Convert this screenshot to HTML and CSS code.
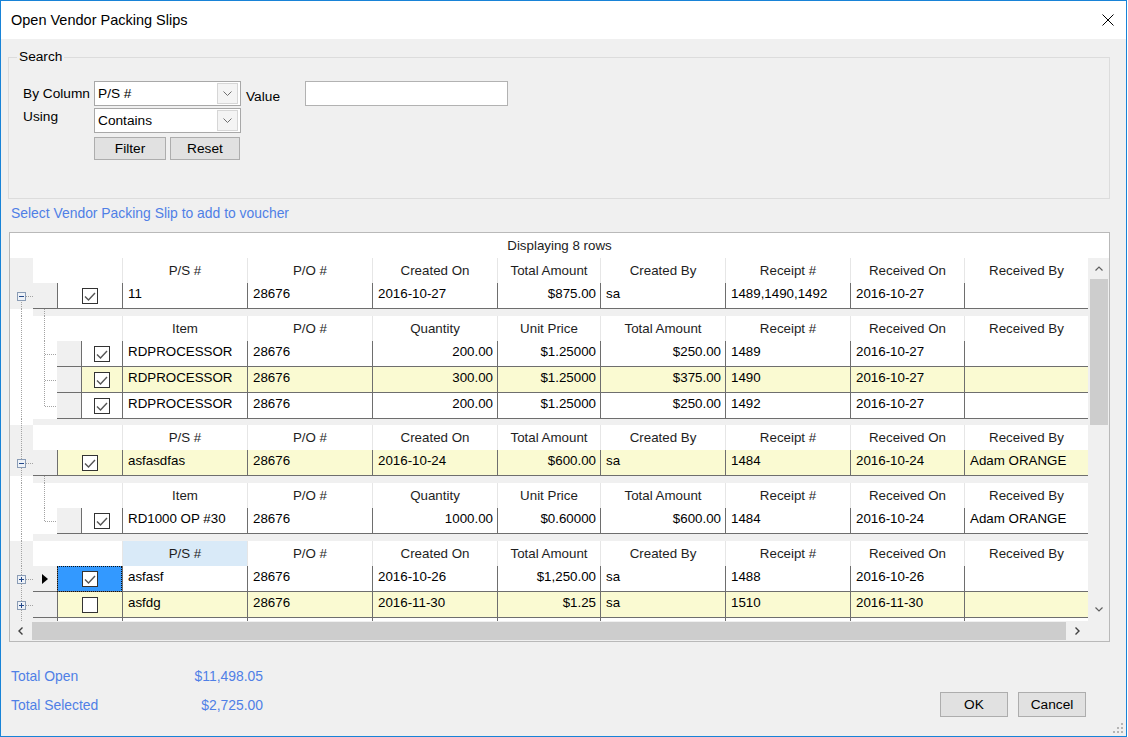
FILE: index.html
```html
<!DOCTYPE html>
<html>
<head>
<meta charset="utf-8">
<title>Open Vendor Packing Slips</title>
<link rel="stylesheet" href="styles.css">
</head>
<body>
<svg class="defs" width="0" height="0" aria-hidden="true">
  <defs>
    <symbol id="cb-on" viewBox="0 0 16 16"><rect x="0.5" y="0.5" width="15" height="15" fill="#fff" stroke="#333"/><polyline points="3,8.5 6.5,12 13,5" fill="none" stroke="#555" stroke-width="1.4"/></symbol>
    <symbol id="cb-off" viewBox="0 0 16 16"><rect x="0.5" y="0.5" width="15" height="15" fill="#fff" stroke="#333"/></symbol>
    <symbol id="ex-minus" viewBox="0 0 9 9"><rect x="0.5" y="0.5" width="8" height="8" fill="#eef2f7" stroke="#8a9cb5"/><path d="M2 4.5H7" stroke="#24498a"/></symbol>
    <symbol id="ex-plus" viewBox="0 0 9 9"><rect x="0.5" y="0.5" width="8" height="8" fill="#eef2f7" stroke="#8a9cb5"/><path d="M2 4.5H7M4.5 2V7" stroke="#24498a"/></symbol>
  </defs>
</svg>
<div class="window">
  <div class="titlebar">
    <span class="title">Open Vendor Packing Slips</span>
    <svg class="close" width="12" height="12" viewBox="0 0 12 12"><path d="M0.5 0.5L11.5 11.5M11.5 0.5L0.5 11.5" stroke="#000" stroke-width="1"/></svg>
  </div>
  <div class="content">
    <fieldset class="search">
      <legend>Search</legend>
      <div class="form">
        <div class="lbl l-col">By Column</div>
        <div class="combo c-col"><span>P/S #</span><span class="dd"><svg width="9" height="5" viewBox="0 0 9 5"><path d="M0.5 0.5L4.5 4.5L8.5 0.5" fill="none" stroke="#6f6f6f"/></svg></span></div>
        <div class="lbl l-value">Value</div>
        <div class="textbox"></div>
        <div class="lbl l-using">Using</div>
        <div class="combo c-using"><span>Contains</span><span class="dd"><svg width="9" height="5" viewBox="0 0 9 5"><path d="M0.5 0.5L4.5 4.5L8.5 0.5" fill="none" stroke="#6f6f6f"/></svg></span></div>
        <div class="btns"><button class="btn b-filter">Filter</button><button class="btn b-reset">Reset</button></div>
      </div>
    </fieldset>

    <div class="hint">Select Vendor Packing Slip to add to voucher</div>

    <div class="grid">
      <div class="caption">Displaying 8 rows</div>
      <div class="gbody">
        <div class="rows">

          <!-- Band 1 -->
          <div class="block">
            <div class="tree pg">
              <div class="t25"></div>
              <div class="t26 ln-start-stub"><svg class="exp" viewBox="0 0 9 9"><use href="#ex-minus"/></svg></div>
            </div>
            <div class="tbl">
              <div class="hrow p"><div class="h sp2"></div><div class="h">P/S #</div><div class="h">P/O #</div><div class="h">Created On</div><div class="h">Total Amount</div><div class="h">Created By</div><div class="h">Receipt #</div><div class="h">Received On</div><div class="h">Received By</div></div>
              <div class="drow p"><div class="rs"></div><div class="cc"><svg class="cb" viewBox="0 0 16 16"><use href="#cb-on"/></svg></div><div class="c">11</div><div class="c">28676</div><div class="c">2016-10-27</div><div class="c r">$875.00</div><div class="c">sa</div><div class="c">1489,1490,1492</div><div class="c">2016-10-27</div><div class="c"></div></div>
            </div>
          </div>

          <div class="gap g7"><div class="tree ln-full"></div><div class="ind ind-gap"></div><div class="strip"></div></div>

          <!-- Child of band 1 -->
          <div class="block">
            <div class="tree ln-full"></div>
            <div class="ind">
              <div class="t25 ln-full"></div>
              <div class="t26 ln-mid-stub2"></div>
              <div class="t26 ln-mid-stub2"></div>
              <div class="t26 ln-end-stub2"></div>
            </div>
            <div class="tbl ch">
              <div class="hrow k"><div class="h sp2"></div><div class="h">Item</div><div class="h">P/O #</div><div class="h">Quantity</div><div class="h">Unit Price</div><div class="h">Total Amount</div><div class="h">Receipt #</div><div class="h">Received On</div><div class="h">Received By</div></div>
              <div class="drow k"><div class="rs"></div><div class="cc"><svg class="cb" viewBox="0 0 16 16"><use href="#cb-on"/></svg></div><div class="c">RDPROCESSOR</div><div class="c">28676</div><div class="c r">200.00</div><div class="c r">$1.25000</div><div class="c r">$250.00</div><div class="c">1489</div><div class="c">2016-10-27</div><div class="c"></div></div>
              <div class="drow k alt"><div class="rs"></div><div class="cc"><svg class="cb" viewBox="0 0 16 16"><use href="#cb-on"/></svg></div><div class="c">RDPROCESSOR</div><div class="c">28676</div><div class="c r">300.00</div><div class="c r">$1.25000</div><div class="c r">$375.00</div><div class="c">1490</div><div class="c">2016-10-27</div><div class="c"></div></div>
              <div class="drow k"><div class="rs"></div><div class="cc"><svg class="cb" viewBox="0 0 16 16"><use href="#cb-on"/></svg></div><div class="c">RDPROCESSOR</div><div class="c">28676</div><div class="c r">200.00</div><div class="c r">$1.25000</div><div class="c r">$250.00</div><div class="c">1492</div><div class="c">2016-10-27</div><div class="c"></div></div>
            </div>
          </div>

          <div class="gap g6"><div class="tree ln-full"></div><div class="strip"></div></div>

          <!-- Band 2 -->
          <div class="block">
            <div class="tree pg">
              <div class="t25 ln-full"></div>
              <div class="t26 ln-full-stub"><svg class="exp" viewBox="0 0 9 9"><use href="#ex-minus"/></svg></div>
            </div>
            <div class="tbl">
              <div class="hrow p"><div class="h sp2"></div><div class="h">P/S #</div><div class="h">P/O #</div><div class="h">Created On</div><div class="h">Total Amount</div><div class="h">Created By</div><div class="h">Receipt #</div><div class="h">Received On</div><div class="h">Received By</div></div>
              <div class="drow p alt"><div class="rs"></div><div class="cc"><svg class="cb" viewBox="0 0 16 16"><use href="#cb-on"/></svg></div><div class="c">asfasdfas</div><div class="c">28676</div><div class="c">2016-10-24</div><div class="c r">$600.00</div><div class="c">sa</div><div class="c">1484</div><div class="c">2016-10-24</div><div class="c">Adam ORANGE</div></div>
            </div>
          </div>

          <div class="gap g7"><div class="tree ln-full"></div><div class="ind ind-gap"></div><div class="strip"></div></div>

          <!-- Child of band 2 -->
          <div class="block">
            <div class="tree ln-full"></div>
            <div class="ind">
              <div class="t25 ln-full"></div>
              <div class="t26 ln-end-stub2"></div>
            </div>
            <div class="tbl ch">
              <div class="hrow k"><div class="h sp2"></div><div class="h">Item</div><div class="h">P/O #</div><div class="h">Quantity</div><div class="h">Unit Price</div><div class="h">Total Amount</div><div class="h">Receipt #</div><div class="h">Received On</div><div class="h">Received By</div></div>
              <div class="drow k"><div class="rs"></div><div class="cc"><svg class="cb" viewBox="0 0 16 16"><use href="#cb-on"/></svg></div><div class="c">RD1000 OP #30</div><div class="c">28676</div><div class="c r">1000.00</div><div class="c r">$0.60000</div><div class="c r">$600.00</div><div class="c">1484</div><div class="c">2016-10-24</div><div class="c">Adam ORANGE</div></div>
            </div>
          </div>

          <div class="gap g7"><div class="tree ln-full"></div><div class="strip"></div></div>

          <!-- Band 3 -->
          <div class="block">
            <div class="tree pg">
              <div class="t25 ln-full"></div>
              <div class="t26 ln-full-stub"><svg class="exp" viewBox="0 0 9 9"><use href="#ex-plus"/></svg></div>
              <div class="t26 ln-full-stub"><svg class="exp" viewBox="0 0 9 9"><use href="#ex-plus"/></svg></div>
              <div class="t26 ln-full"></div>
            </div>
            <div class="tbl">
              <div class="hrow p"><div class="h sp2"></div><div class="h sorted">P/S #</div><div class="h">P/O #</div><div class="h">Created On</div><div class="h">Total Amount</div><div class="h">Created By</div><div class="h">Receipt #</div><div class="h">Received On</div><div class="h">Received By</div></div>
              <div class="drow p"><div class="rs"><svg width="6" height="10" viewBox="0 0 6 10"><path d="M0 0L6 5L0 10Z" fill="#000"/></svg></div><div class="cc active"><svg class="cb" viewBox="0 0 16 16"><use href="#cb-on"/></svg></div><div class="c">asfasf</div><div class="c">28676</div><div class="c">2016-10-26</div><div class="c r">$1,250.00</div><div class="c">sa</div><div class="c">1488</div><div class="c">2016-10-26</div><div class="c"></div></div>
              <div class="drow p alt"><div class="rs"></div><div class="cc"><svg class="cb" viewBox="0 0 16 16"><use href="#cb-off"/></svg></div><div class="c">asfdg</div><div class="c">28676</div><div class="c">2016-11-30</div><div class="c r">$1.25</div><div class="c">sa</div><div class="c">1510</div><div class="c">2016-11-30</div><div class="c"></div></div>
              <div class="drow p"><div class="rs"></div><div class="cc"></div><div class="c"></div><div class="c"></div><div class="c"></div><div class="c"></div><div class="c"></div><div class="c"></div><div class="c"></div><div class="c"></div></div>
            </div>
          </div>

        </div>
        <div class="vscroll">
          <div class="sbtn"><svg width="8" height="5" viewBox="0 0 8 5"><path d="M0.5 4.5L4 1L7.5 4.5" fill="none" stroke="#606060" stroke-width="1.2"/></svg></div>
          <div class="thumb-v"></div>
          <div class="vfill"></div>
          <div class="sbtn sb-down"><svg width="8" height="5" viewBox="0 0 8 5"><path d="M0.5 0.5L4 4L7.5 0.5" fill="none" stroke="#606060" stroke-width="1.2"/></svg></div>
        </div>
      </div>
      <div class="hscroll">
        <div class="hbtn"><svg width="5" height="8" viewBox="0 0 5 8"><path d="M4.5 0.5L1 4L4.5 7.5" fill="none" stroke="#404040" stroke-width="1.4"/></svg></div>
        <div class="thumb-h"></div>
        <div class="hbtn"><svg width="5" height="8" viewBox="0 0 5 8"><path d="M0.5 0.5L4 4L0.5 7.5" fill="none" stroke="#404040" stroke-width="1.4"/></svg></div>
        <div class="corner"></div>
      </div>
    </div>

    <div class="footer">
      <div class="totals">
        <div>Total Open</div><div class="amt">$11,498.05</div>
        <div>Total Selected</div><div class="amt">$2,725.00</div>
      </div>
      <div class="dbtns">
        <button class="btn dbtn">OK</button>
        <button class="btn dbtn">Cancel</button>
      </div>
    </div>
  </div>
  <svg class="grip" width="12" height="12" viewBox="0 0 12 12">
    <rect x="9" y="1" width="2" height="2" fill="#b5b5b5"/>
    <rect x="5" y="5" width="2" height="2" fill="#b5b5b5"/>
    <rect x="9" y="5" width="2" height="2" fill="#b5b5b5"/>
    <rect x="1" y="9" width="2" height="2" fill="#b5b5b5"/>
    <rect x="5" y="9" width="2" height="2" fill="#b5b5b5"/>
    <rect x="9" y="9" width="2" height="2" fill="#b5b5b5"/>
  </svg>
</div>
</body>
</html>
```

FILE: styles.css
```css
* { box-sizing: border-box; }
html, body { margin: 0; padding: 0; background: #fff; }
body { font-family: "Liberation Sans", Arial, sans-serif; color: #000; }

:root {
  --vd: repeating-linear-gradient(to bottom, #a3a3a3 0 1px, transparent 1px 2px);
  --hd: repeating-linear-gradient(to right, #a3a3a3 0 1px, transparent 1px 2px);
  --pcols: 24px 65px 125px 125px 125px 103px 125px 125px 114px 124px;
  --kcols: 24px 41px 125px 125px 125px 103px 125px 125px 114px 124px;
  --line: #6e6e6e;
}

.defs { display: block; width: 0; height: 0; overflow: hidden; }

.window {
  width: 1127px;
  height: 737px;
  border: 1px solid #1883d7;
  background: #f0f0f0;
  display: flex;
  flex-direction: column;
  position: relative;
}

.titlebar {
  height: 38px;
  flex: none;
  background: #fff;
  display: flex;
  align-items: center;
  justify-content: space-between;
  padding: 0 12px 0 10px;
}
.title { font-size: 14.5px; }
.close { display: block; }

.content { flex: 1; display: flex; flex-direction: column; min-height: 0; }

/* Search group */
.search {
  margin: 10px 0 0 7px;
  width: 1102px;
  height: 150px;
  flex: none;
  border: 1px solid #dcdcdc;
  padding: 16px 0 0 0;
  min-width: 0;
}
.search legend {
  margin-left: 8px;
  padding: 0 2px;
  font-size: 13.7px;
  line-height: 16px;
}
.form {
  margin-left: 14px;
  display: grid;
  grid-template-columns: 71px 147px 64px 203px;
  grid-template-rows: 27px 29px 23px;
  font-size: 13.7px;
}
.lbl { line-height: 25px; white-space: nowrap; }
.l-col { grid-row: 1; grid-column: 1; }
.l-value { grid-row: 1; grid-column: 3; padding-left: 5px; padding-top: 3px; }
.l-using { grid-row: 2; grid-column: 1; line-height: 18px; }
.combo {
  height: 25px;
  background: #fff;
  border: 1px solid #a8a8a8;
  display: flex;
  align-items: center;
  justify-content: space-between;
  padding-left: 3px;
}
.c-col { grid-row: 1; grid-column: 2; }
.c-using { grid-row: 2; grid-column: 2; }
.dd {
  width: 21px;
  height: 21px;
  margin-right: 2px;
  border: 1px solid #d6d6d6;
  background: #f4f4f4;
  display: flex;
  align-items: center;
  justify-content: center;
}
.textbox {
  grid-row: 1;
  grid-column: 4;
  height: 25px;
  background: #fff;
  border: 1px solid #b2b2b2;
}
.btns { grid-row: 3; grid-column: 2; display: flex; gap: 4px; }
.btn {
  font-family: inherit;
  font-size: 13.7px;
  color: #000;
  background: #e1e1e1;
  border: 1px solid #adadad;
  padding: 0;
  height: 23px;
  display: flex;
  align-items: center;
  justify-content: center;
}
.b-filter { width: 72px; }
.b-reset { width: 70px; }

.hint {
  margin: 6px 0 0 10px;
  font-size: 13.9px;
  line-height: 16px;
  color: #4f7fe6;
  flex: none;
}

/* Grid */
.grid {
  margin: 11px 0 0 8px;
  width: 1101px;
  height: 410px;
  flex: none;
  border: 1px solid #b9b9b9;
  background: #fff;
  display: flex;
  flex-direction: column;
  font-size: 13.33px;
}
.caption { height: 25px; line-height: 25px; text-align: center; color: #222; flex: none; }
.gbody { height: 363px; display: flex; flex: none; }
.rows { width: 1078px; height: 363px; overflow: hidden; display: flex; flex-direction: column; }

.block { display: flex; flex: none; }
.tree { width: 23px; flex: none; display: flex; flex-direction: column; }
.tree.pg { background-color: #f0f0f0; }
.ind { width: 24px; flex: none; display: flex; flex-direction: column; }
.t25 { height: 25px; flex: none; }
.t26 { height: 26px; flex: none; display: flex; align-items: center; }
.exp { width: 9px; height: 9px; margin-left: 7px; display: block; }

.ln-full { background: var(--vd) 11px 0 / 1px 100% no-repeat; }
.ln-start-stub { background: var(--vd) 11px 13px / 1px calc(100% - 13px) no-repeat, var(--hd) 16px 13px / 7px 1px no-repeat; }
.ln-full-stub { background: var(--vd) 11px 0 / 1px 100% no-repeat, var(--hd) 16px 13px / 7px 1px no-repeat; }
.ln-mid-stub2 { background: var(--vd) 11px 0 / 1px 100% no-repeat, var(--hd) 12px 13px / 12px 1px no-repeat; }
.ln-end-stub2 { background: var(--vd) 11px 0 / 1px 14px no-repeat, var(--hd) 12px 13px / 12px 1px no-repeat; }
.ind-gap { background: var(--vd) 11px 0 / 1px 100% no-repeat, #f0f0f0; }

.gap { display: flex; flex: none; }
.g7 { height: 7px; }
.g6 { height: 6px; }
.strip { flex: 1; background: #f0f0f0; }

.tbl { width: 1055px; flex: none; }
.tbl.ch { width: 1031px; }

.hrow { display: grid; height: 25px; }
.hrow.p, .drow.p { grid-template-columns: var(--pcols); }
.hrow.k, .drow.k { grid-template-columns: var(--kcols); }
.h {
  text-align: center;
  line-height: 25px;
  color: #1e1e1e;
  white-space: nowrap;
  overflow: hidden;
  background: #fff;
}
.h + .h { border-left: 1px solid #e6e6e6; }
.sp2 { grid-column: span 2; }
.h.sorted { background: #d9eaf8; }

.drow { display: grid; height: 26px; }
.rs {
  background: #f0f0f0;
  border-bottom: 1px solid var(--line);
  display: flex;
  align-items: center;
  justify-content: center;
}
.cc {
  background: #fff;
  border-left: 1px solid var(--line);
  border-bottom: 1px solid var(--line);
  display: flex;
  align-items: center;
  justify-content: center;
}
.cb { width: 16px; height: 16px; display: block; }
.cc.active { background: #3399ff; outline: 1px dotted #111; outline-offset: -1px; }
.c {
  background: #fff;
  border-left: 1px solid var(--line);
  border-bottom: 1px solid var(--line);
  padding: 0 4px 0 5px;
  line-height: 22px;
  white-space: nowrap;
  overflow: hidden;
}
.c.r { text-align: right; }
.alt .c, .alt .cc { background: #fafad2; }

.vscroll { width: 21px; flex: none; background: #f0f0f0; display: flex; flex-direction: column; }
.sbtn { height: 20px; flex: none; display: flex; align-items: center; justify-content: center; }
.sb-down { margin-bottom: 2px; }
.thumb-v { height: 146px; flex: none; margin: 1px 1px 0 2px; background: #cdcdcd; }
.vfill { flex: 1; }

.hscroll { height: 20px; flex: none; display: flex; background: #f0f0f0; }
.hbtn { width: 21px; flex: none; display: flex; align-items: center; justify-content: center; }
.thumb-h { flex: 1; margin: 1px; background: #cdcdcd; }
.corner { width: 21px; flex: none; background: #f0f0f0; }

/* Footer */
.footer { display: flex; align-items: flex-start; margin-top: 26px; flex: none; }
.totals {
  margin-left: 10px;
  display: grid;
  grid-template-columns: 160px 92px;
  row-gap: 13px;
  font-size: 13.9px;
  line-height: 16px;
  color: #4f7fe6;
}
.amt { text-align: right; }
.dbtns { margin-left: auto; margin-right: 40px; margin-top: 24px; display: flex; gap: 10px; }
.dbtn { width: 68px; height: 25px; }

.grip { position: absolute; right: 2px; bottom: 2px; display: block; }
```
